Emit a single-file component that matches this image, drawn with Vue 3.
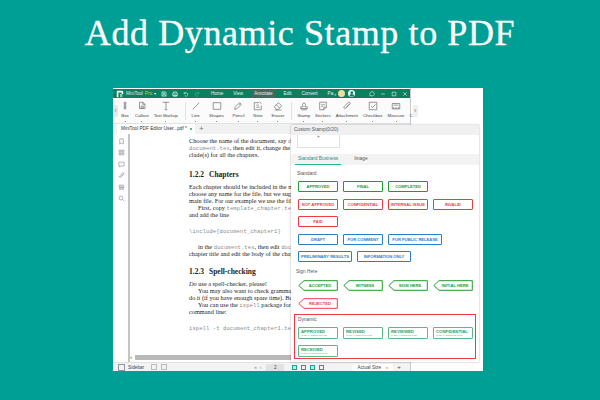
<template>
  <div class="stage">
    <h1 class="title">Add Dynamic Stamp to PDF</h1>
    <div class="window">
      <div class="app">
        <div class="menubar">
          <svg class="logo" viewBox="0 0 10 10"><path d="M1 9V1h7l1 1v3H7V3H3v6z" fill="#fff"/><path d="M5 5h3v4H5z" fill="#7fd0a8"/></svg>
          <span class="brand">MiniTool</span><span class="pro">Pro</span>
          <span class="caret">▾</span>
          <svg class="bar-ico first" viewBox="0 0 10 10"><path d="M1.500 1.500h6l1 1v6h-7zM3 1.500v2.500h3.500v-2.500M3 8.500V6h4v2.500" /></svg>
          <svg class="bar-ico" viewBox="0 0 10 10"><path d="M2.500 3.500v-2h5v2M1 3.500h8v4H1zM2.500 6.500h5v2.500h-5z" /></svg>
          <svg class="bar-ico" viewBox="0 0 10 10"><path d="M2 4.500a3 3 0 1 1 1 3.500M2 2v2.500h2.500" /></svg>
          <svg class="bar-ico dim" viewBox="0 0 10 10"><path d="M8 4.500a3 3 0 1 0-1 3.500M8 2v2.500H5.500" /></svg>
          <nav class="menus">
            <span v-for="m in menus" :key="m" class="menu" :class="{ on: m === 'Annotate' }">{{ m }}</span>
          </nav>
          <span class="chev">›</span>
          <span class="avatar sun"></span>
          <span class="avatar user"><svg viewBox="0 0 10 10"><circle cx="5" cy="3.600" r="1.800" fill="#0d7f5f"/><path d="M1.800 8.500a3.200 3.200 0 0 1 6.400 0z" fill="#0d7f5f"/></svg></span>
          <svg class="bar-ico msg" viewBox="0 0 10 10"><path d="M5 1.200a3.800 3.500 0 1 1-2 6.400L1.500 8.500l.4-2A3.800 3.500 0 0 1 5 1.200z" /></svg>
          <svg class="bar-ico" viewBox="0 0 10 10"><path d="M2 5h6" /></svg>
          <svg class="bar-ico" viewBox="0 0 10 10"><path d="M2 2h6v6H2z" /></svg>
          <svg class="bar-ico" viewBox="0 0 10 10"><path d="M2 2l6 6M8 2l-6 6" /></svg>
        </div>

        <div class="toolbar">
          <span class="tool-chev">‹</span>
          <div class="group g1">
            <div v-for="t in tools1" :key="t.name" class="tool">
              <svg viewBox="0 0 12 12"><path :d="t.d" /></svg>
              <span>{{ t.name }}</span><i></i>
            </div>
          </div>
          <span class="sep"></span>
          <div class="group g2">
            <div v-for="t in tools2" :key="t.name" class="tool">
              <svg viewBox="0 0 12 12"><path :d="t.d" /></svg>
              <span>{{ t.name }}</span><i></i>
            </div>
          </div>
          <span class="sep"></span>
          <div class="group g3">
            <div v-for="t in tools3" :key="t.name" class="tool">
              <svg viewBox="0 0 12 12"><path :d="t.d" /></svg>
              <span>{{ t.name }}</span><i></i>
            </div>
          </div>
          <span class="tool-c">C</span>
          <span class="tool-chev right">›</span>
        </div>

        <div class="tabbar">
          <div class="tab">MiniTool PDF Editor User...pdf *<b></b></div>
          <span class="plus">+</span>
        </div>

        <div class="body">
          <aside class="side">
            <svg v-for="(d, i) in sideIcons" :key="i" viewBox="0 0 12 12"><path :d="d" /></svg>
          </aside>
          <div class="doc-wrap">
            <div class="doc">
              <p>Choose the name of the document, say <tt>do</tt></p>
              <p><tt>document.tex</tt>, then edit it, change the</p>
              <p>clade(s) for all the chapters.</p>
              <h2><span>1.2.2</span>Chapters</h2>
              <p>Each chapter should be included in the main,</p>
              <p>choose any name for the file, but we sugge</p>
              <p>main file. For our example we use the file na</p>
              <p class="ind">First, copy <tt>template_chapter.te</tt></p>
              <p>and add the line</p>
              <p class="code"><tt>\include{document_chapter1}</tt></p>
              <p class="ind">in the <tt>document.tex</tt>, then edit <tt>docu</tt></p>
              <p>chapter title and edit the body of the chapter</p>
              <h2 class="second"><span>1.2.3</span>Spell-checking</h2>
              <p><em>Do</em> use a spell-checker, please!</p>
              <p class="ind">You may also want to check grammar, s</p>
              <p>do it (if you have enough spare time). But yo</p>
              <p class="ind">You can use the <tt>ispell</tt> package for th</p>
              <p>command line:</p>
              <p class="code"><tt>ispell -t document_chapter1.te</tt></p>
            </div>
            <div class="hscroll"><span>‹</span></div>
          </div>
        </div>

        <div class="status">
          <span class="check"></span><span>Sidebar</span>
          <span class="mini first"></span><span class="mini"></span>
          <span class="pager">
            <em>«</em><em>‹</em><span class="page">2</span>
          </span>
          <span class="st-icons">
            <i class="teal"></i><i></i><i class="teal"></i><i></i>
          </span>
          <span class="zoom">Actual Size<small>▾</small></span>
          <span class="zplus">+</span>
        </div>
      </div>

      <div class="panel">
        <div class="p-head">Custom Stamp(0/20)</div>
        <div class="p-custom"><div class="add"><span>+</span></div></div>
        <div class="p-tabs">
          <span class="ptab on">Standard Business</span>
          <span class="ptab">Image</span>
        </div>
        <div class="p-body">
          <div class="lab">Standard</div>
          <div class="stamps">
            <div v-for="(row, i) in standard" :key="i" class="stamp-row">
              <span v-for="s in row" :key="s.t" class="stamp" :class="[s.c, s.w]">{{ s.t }}</span>
            </div>
          </div>
          <div class="lab sign">Sign Here</div>
          <div class="stamps signs">
            <div v-for="(row, i) in signs" :key="i" class="stamp-row">
              <span v-for="s in row" :key="s.t" class="stamp arrow" :class="s.c">
                <svg viewBox="0 0 40 11" preserveAspectRatio="none"><polygon points="6,.7 39.300,.7 39.300,10.300 6,10.300 .8,5.500" /></svg>
                <b>{{ s.t }}</b>
              </span>
            </div>
          </div>
          <div class="dyn-box">
            <div class="lab dyn">Dynamic</div>
            <div class="dyns">
              <div v-for="s in dynamics" :key="s" class="dstamp">
                <strong>{{ s }}</strong>
                <small>MANUAL, 2021/01/15 10:26</small>
              </div>
            </div>
          </div>
        </div>
      </div>
    </div>
  </div>
</template>

<script setup>
const menus = ['Home', 'View', 'Annotate', 'Edit', 'Convert', 'Pa']

const tools1 = [
  { name: 'Box', d: 'M5 1.500h2v2H5zM5 4.500h2v2H5zM5 7.500h2v2H5z' },
  { name: 'Callout', d: 'M3 1.500h4l2.500 2.500v5H3zM7 1.500V4h2.500M5 6h2.500v2.500H5z' },
  { name: 'Text Markup', d: 'M2 1.500h8M6 1.500v9M4.500 10.500h3' }
]
const tools2 = [
  { name: 'Line', d: 'M2 10l8-8' },
  { name: 'Shapes', d: 'M1.500 2h9v8h-9z' },
  { name: 'Pencil', d: 'M2 10l.5-2.500 5.500-5.500 2 2-5.500 5.500zM7 3l2 2' },
  { name: 'Note', d: 'M1.500 2h6M1.500 2v8.500h8.500v-5M8 1l2.500 2.500M4 5h3M4 7.500h4' },
  { name: 'Eraser', d: 'M1.500 7l5-5 4 4-4 4H4zM4 4.500l4 4M2 10.800h8' }
]
const tools3 = [
  { name: 'Stamp', d: 'M4.500 5.500a1.800 2 0 1 1 3 0L7 7h3v2H2V7h3zM2.500 10.500h7' },
  { name: 'Stickers', d: 'M2 1.500h8v6l-3 3H2zM7 10.500V7.500h3M4 4.500h4M4 6.500h2' },
  { name: 'Attachment', d: 'M9 3.500l-4.500 5a1.300 1.300 0 0 1-2-1.800L7.500 1.800a1 1 0 0 1 2 1.800L5 8' },
  { name: 'Checkbox', d: 'M1.500 1.500h9v9h-9zM3.500 6l2 2 3.500-4' },
  { name: 'Measure', d: 'M1.500 3h9v6.500h-9zM3 9.500V7.500M5 9.500V7.500M7 9.500V7.500M9 9.500V7.500M3 5h6' }
]

const sideIcons = [
  'M3 1.500h6v9l-3-2.200-3 2.200z',
  'M2 2h3.200v3.200H2zM6.800 2H10v3.200H6.800zM2 6.800h3.200V10H2zM6.800 6.800H10V10H6.800z',
  'M1.500 2h9v6.500H5L3 10.500V8.500H1.500zM4 5.200h.5M6 5.200h.5M8 5.200h.5',
  'M9.500 3.500L4.500 8.800a1.300 1.300 0 0 1-2-1.800L7.800 1.800a1.200 1.200 0 0 1 2 1.700L5 8.500',
  'M2 2h8v4H2zM3.500 6v4.500M8.500 6v4.500M2 8.500h8M4 4h4',
  'M5.200 1.800a3.400 3.400 0 1 1 0 6.800 3.400 3.400 0 0 1 0-6.800zM7.800 7.800l3 3'
]

const standard = [
  [{ t: 'APPROVED', c: 'green' }, { t: 'FINAL', c: 'green' }, { t: 'COMPLETED', c: 'green' }],
  [{ t: 'NOT APPROVED', c: 'red' }, { t: 'CONFIDENTIAL', c: 'red' }, { t: 'INTERNAL ISSUE', c: 'red' }, { t: 'INVALID', c: 'red' }],
  [{ t: 'PAID', c: 'red' }],
  [{ t: 'DRAFT', c: 'blue' }, { t: 'FOR COMMENT', c: 'blue' }, { t: 'FOR PUBLIC RELEASE', c: 'blue', w: 'wide' }],
  [{ t: 'PRELIMINARY RESULTS', c: 'blue', w: 'wide' }, { t: 'INFORMATION ONLY', c: 'blue', w: 'wide' }]
]

const signs = [
  [{ t: 'ACCEPTED', c: 'green' }, { t: 'WITNESS', c: 'green' }, { t: 'SIGN HERE', c: 'green' }, { t: 'INITIAL HERE', c: 'green' }],
  [{ t: 'REJECTED', c: 'red' }]
]

const dynamics = ['APPROVED', 'REVISED', 'REVIEWED', 'CONFIDENTIAL', 'RECEIVED']
</script>

<style>
html, body { margin: 0; background: #009f95; }
</style>

<style scoped>
.stage {
  width: 600px;
  height: 400px;
  background: #009f95;
  overflow: hidden;
  font-family: "Liberation Sans", sans-serif;
  color: #444;
}
.title {
  margin: 0;
  height: 88px;
  padding-top: 13px;
  box-sizing: border-box;
  text-align: center;
  font: 400 36px/40px "Liberation Serif", serif;
  color: #fff;
  letter-spacing: .6px;
  -webkit-text-stroke: .3px #fff;
}
.window {
  position: relative;
  width: 370px;
  height: 283px;
  margin-left: 113px;
  background: #fff;
}
.app {
  width: 298px;
  height: 283px;
  padding-top: 1px;
  box-sizing: border-box;
  border-right: 1px solid #c9c9c9;
  display: flex;
  flex-direction: column;
}
.menubar {
  height: 9px;
  flex: none;
  background: #0d7f5f;
  color: #e6f3ee;
  font-size: 4.600px;
  display: flex;
  align-items: center;
  padding-left: 3px;
  white-space: nowrap;
}
.logo { width: 8px; height: 8px; margin-right: 2px; flex: none; }
.brand { color: #d8ece4; }
.pro { color: #e2b93b; margin-left: 2px; }
.caret { margin-left: 2px; font-size: 4px; }
.bar-ico {
  width: 6px;
  height: 6px;
  margin-left: 5px;
  fill: none;
  stroke: #eaf5f1;
  stroke-width: 1;
  flex: none;
}
.bar-ico.first { margin-left: 5px; }
.bar-ico.dim { stroke: #6cae98; }
.bar-ico.msg { margin-left: 13.500px; }
.menus { display: flex; align-items: center; margin-left: 10px; }
.menu { padding: 0 1px; margin-right: 8px; line-height: 8px; }
.menu.on { background: #46685c; border-radius: 1px; padding: 0 2px; }
.menu:last-child { margin-right: 0; }
.chev { margin-left: 0; font-size: 6px; }
.avatar {
  width: 7.500px;
  height: 7.500px;
  border-radius: 50%;
  flex: none;
  margin-left: 2.500px;
}
.avatar.sun { background: #f4d9a0; margin-left: 1.500px; }
.avatar.user { background: #fff; }
.avatar svg { display: block; }

.toolbar {
  height: 26px;
  flex: none;
  display: flex;
  align-items: flex-start;
  border-bottom: 1px solid #e3e3e3;
  background: #fbfbfb;
  font-size: 4.400px;
  color: #444;
  padding-top: 3px;
  box-sizing: border-box;
}
.tool-chev {
  width: 5px;
  height: 12px;
  margin-top: 4px;
  background: #e8e8e8;
  font-size: 7px;
  line-height: 11px;
  text-align: center;
  color: #888;
  flex: none;
}
.tool-chev.right { margin-left: auto; background: #f0f0f0; }
.group { display: flex; flex: none; }
.g1 { gap: 5px; margin-left: 2px; }
.g2 { gap: 8.500px; }
.g3 { gap: 5px; }
.tool {
  display: flex;
  flex-direction: column;
  align-items: center;
  white-space: nowrap;
}
.tool svg {
  width: 10px;
  height: 10px;
  fill: none;
  stroke: #666;
  stroke-width: .8;
  margin-bottom: 2px;
}
.tool span { line-height: 6px; }
.tool i {
  width: 1px;
  height: 1px;
  background: #888;
  margin-top: 2px;
}
.sep {
  width: 1px;
  height: 18px;
  background: #e2e2e2;
  margin: 1px 5px 0 7px;
  flex: none;
}
.tool-c { margin: 12px 0 0 5px; line-height: 6px; }

.tabbar {
  height: 10px;
  flex: none;
  display: flex;
  align-items: flex-end;
  background: #f1f1f1;
  font-size: 4.700px;
  color: #333;
}
.tab {
  height: 10px;
  line-height: 10px;
  background: #fff;
  padding: 0 3px 0 4px;
  margin-left: 4px;
  display: flex;
  align-items: center;
  gap: 3px;
  white-space: nowrap;
}
.tab b { width: 2px; height: 2px; border-radius: 50%; background: #26a84a; }
.plus { margin: 0 0 1px 4px; font-size: 8px; line-height: 9px; color: #777; }

.body {
  flex: 1;
  display: flex;
  min-height: 0;
}
.side {
  width: 17px;
  flex: none;
  display: flex;
  flex-direction: column;
  align-items: center;
  gap: 4.500px;
  padding-top: 3.500px;
  box-sizing: border-box;
  border-right: 2px solid #c4c4c4;
}
.side svg {
  width: 7px;
  height: 7px;
  fill: none;
  stroke: #777;
  stroke-width: .9;
  flex: none;
  margin-left: 1px;
}
.doc-wrap {
  flex: 1;
  min-width: 0;
  display: flex;
  flex-direction: column;
  background: #fff;
}
.doc {
  flex: 1;
  padding: 3px 0 0 59px;
  overflow: hidden;
  font: 6.300px/7px "Liberation Serif", serif;
  color: #222;
  white-space: nowrap;
}
.doc p { margin: 0; height: 7px; }
.doc p.ind { padding-left: 9px; }
.doc tt { font: 5.500px/7px "Liberation Mono", monospace; color: #8a8a8a; letter-spacing: .1px; }
.doc p.code { margin: 9px 0; }
.doc h2 {
  margin: 13px 0 4px;
  font: 700 7.500px/8px "Liberation Serif", serif;
  color: #222;
}
.doc h2 span { display: inline-block; width: 20px; }
.doc h2.second { margin-top: 11px; }
.hscroll {
  height: 5px;
  margin: 0 0 2px 0;
  background: #b9b9b9;
  flex: none;
}
.hscroll span {
  display: block;
  width: 5px;
  background: #fff;
  font-size: 6px;
  line-height: 5px;
  color: #333;
}

.status {
  height: 9px;
  flex: none;
  display: flex;
  align-items: center;
  background: #f3f3f3;
  border-top: 1px solid #e2e2e2;
  box-sizing: border-box;
  font-size: 4.700px;
  color: #444;
  padding-left: 5px;
  white-space: nowrap;
}
.check {
  width: 5px;
  height: 5px;
  border: 1px solid #8a97a6;
  margin-right: 3px;
  flex: none;
}
.mini {
  width: 4px;
  height: 4px;
  border: 1px solid #bbb;
  margin-left: 4px;
  flex: none;
}
.mini.first { margin-left: 7px; }
.pager { display: flex; align-items: center; margin-left: 87px; gap: 3px; }
.pager em { font-style: normal; color: #888; }
.page { width: 18px; text-align: center; background: #e2e2e2; line-height: 7px; margin-left: 2px; }
.st-icons { display: flex; gap: 4px; margin-left: 8px; }
.st-icons i { width: 5px; height: 5px; border: 1px solid #777; box-sizing: border-box; }
.st-icons i.teal { border-color: #1aa39a; background: #bfe8e3; }
.zoom {
  width: 41px;
  height: 7px;
  line-height: 7px;
  margin-left: 28px;
  background: #fff;
  border-radius: 3px;
  text-align: center;
  flex: none;
}
.zoom small { font-size: 3px; margin-left: 5px; }
.zplus { margin-left: 4px; font-size: 6px; }

.panel {
  position: absolute;
  left: 178px;
  top: 37px;
  width: 188px;
  height: 237px;
  background: #fff;
  box-shadow: 0 0 2px rgba(0, 0, 0, .3);
  font-size: 4.800px;
  color: #555;
}
.p-head {
  height: 10px;
  line-height: 10px;
  background: #f0f0f0;
  padding-left: 3px;
}
.p-custom { height: 19px; padding-left: 6px; }
.add {
  width: 43px;
  height: 13px;
  border: 1px solid #e0e0e0;
  border-top: 0;
  text-align: center;
  box-sizing: border-box;
  color: #777;
  line-height: 4px;
}
.p-tabs {
  height: 11px;
  background: #f3f3f3;
  display: flex;
  gap: 10px;
  padding-left: 4px;
  line-height: 10px;
}
.ptab { padding: 0 3px; height: 11px; box-sizing: border-box; color: #555; }
.ptab.on { color: #2a8f80; border-bottom: 1px solid #2db29a; }
.p-body { padding: 6px 0 0 6px; }
.lab { height: 6px; line-height: 6px; margin-bottom: 4px; }
.stamps {
  display: flex;
  flex-direction: column;
  gap: 6.600px;
  padding-left: 1px;
}
.stamp-row { display: flex; gap: 5px; }
.stamp {
  width: 40px;
  height: 11px;
  box-sizing: border-box;
  border: 1.400px solid;
  border-radius: 1px;
  font-weight: 700;
  font-size: 4.100px;
  display: flex;
  align-items: center;
  justify-content: center;
  white-space: nowrap;
  overflow: hidden;
}
.stamp.wide { width: 54px; }
.green { color: #1f9d2b; border-color: #1f9d2b; }
.red { color: #f23a45; border-color: #f23a45; }
.blue { color: #2a7fc9; border-color: #2a7fc9; }
.lab.sign { margin: 7px 0 4.600px -1px; }
.signs { gap: 7px; }
.stamp.arrow {
  position: relative;
  border: 0;
  overflow: visible;
}
.arrow svg {
  position: absolute;
  inset: 0;
  width: 100%;
  height: 100%;
  fill: none;
  stroke: currentColor;
  stroke-width: 1;
}
.arrow b { position: relative; padding-left: 4px; }
.dyn-box {
  width: 182px;
  height: 45px;
  margin: 5px 0 0 -3px;
  box-sizing: border-box;
  border: 1px solid #ef3b45;
  padding: 2.500px 0 0 3px;
}
.lab.dyn { margin-bottom: 4px; }
.dyns { display: flex; flex-wrap: wrap; gap: 6px 5px; }
.dstamp {
  width: 40px;
  height: 12px;
  box-sizing: border-box;
  border: 1.400px solid #5cb88c;
  border-radius: 1px;
  padding: .5px 0 0 2px;
  color: #2a9e5e;
  overflow: hidden;
  white-space: nowrap;
}
.dstamp strong { display: block; font-size: 4.300px; line-height: 5.500px; }
.dstamp small { display: block; font-size: 2.100px; line-height: 3px; color: #5a9a7a; }
</style>
